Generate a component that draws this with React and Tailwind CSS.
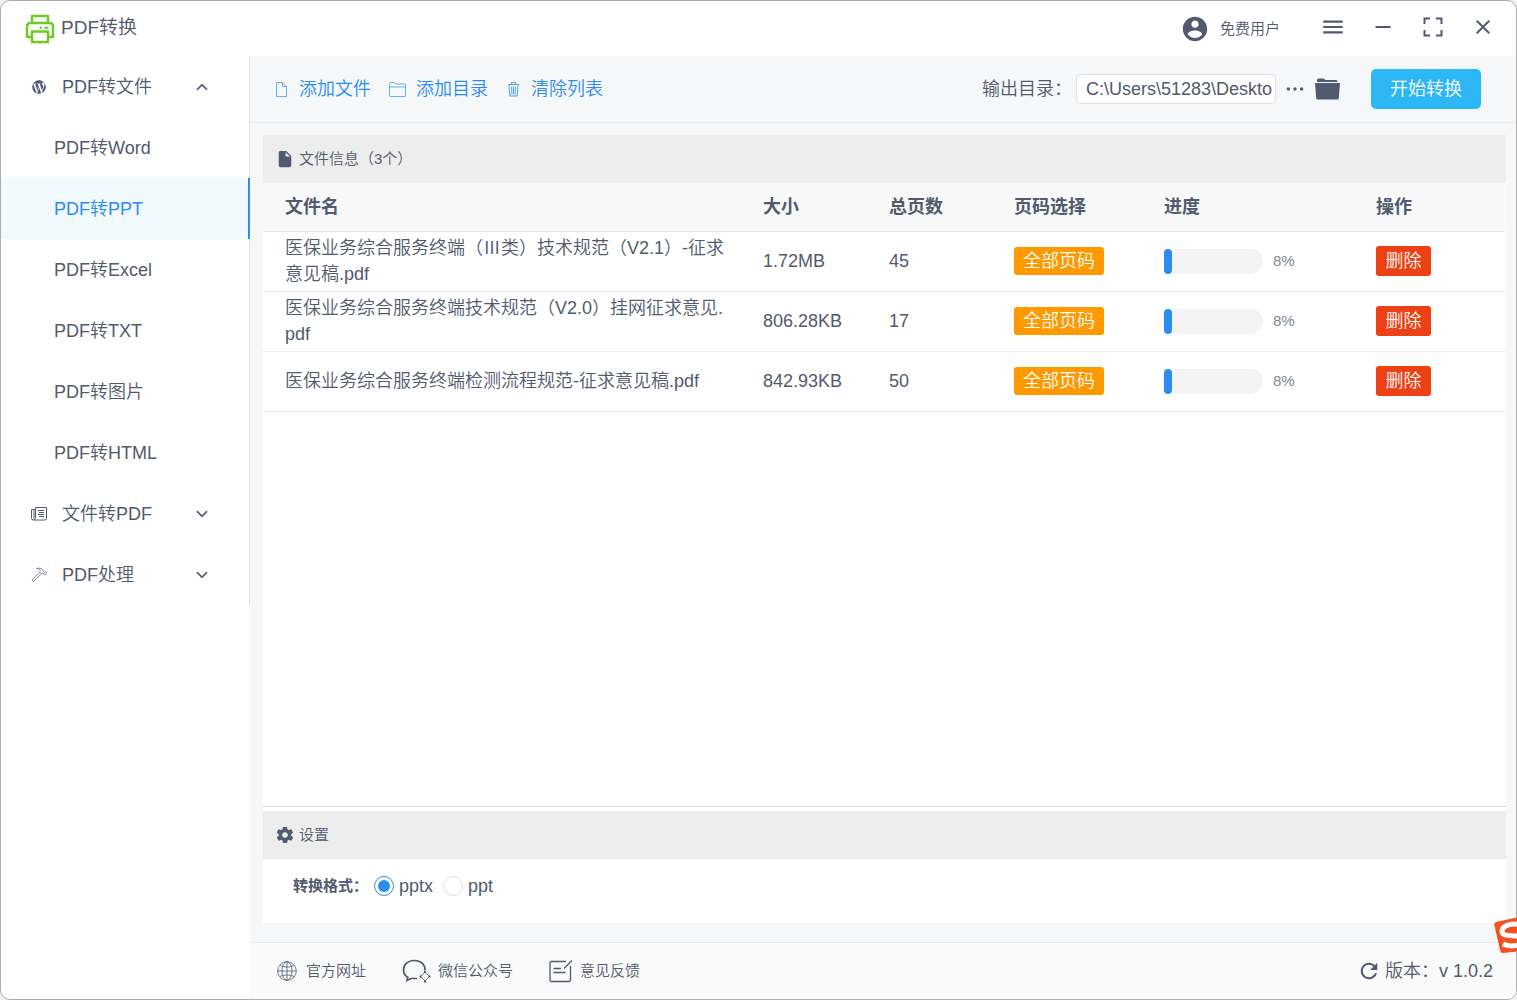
import React, { useState } from 'react';
import clsx from 'clsx';
import {
    IoIosArrowDown,
    IoIosArrowUp,
    IoIosMore,
    IoLogoWordpress,
    IoMdClose,
    IoMdContact,
    IoMdDocument,
    IoMdMenu,
    IoMdRefresh,
    IoMdRemove,
    IoMdSettings,
} from 'react-icons/io';

const Outline = ({ className, viewBox = '0 0 24 24', strokeWidth = 1, children }) => (
    <svg
        viewBox={viewBox}
        className={clsx('shrink-0', className)}
        fill="none"
        stroke="currentColor"
        strokeWidth={strokeWidth}
        aria-hidden="true"
    >
        {children}
    </svg>
);

const PrinterLogo = () => (
    <Outline className="w-[30px] h-[30px] text-[#6fca24]" viewBox="0 0 30 30" strokeWidth={2.4}>
        <path d="M7 8.500V2h16v6.500M6.500 23H2V12.500Q2 9 5.500 9h19q3.500 0 3.500 3.500V23h-4.500" strokeLinejoin="round" />
        <path d="M7 17.500h16V28H7z" />
        <path d="M14.500 13.700h2.500M19.500 13.700h4" strokeWidth={2} />
    </Outline>
);

const PaperIcon = () => (
    <Outline className="w-4 h-4" viewBox="0 0 16 16">
        <path d="M4.500 1.500h11v11a1.500 1.500 0 0 1-1.500 1.500H2.500a2 2 0 0 1-2-2V3.500h3M4.500 1.500v10.500a1.500 1.500 0 0 1-2 1.500M3 3.500v9" />
        <path d="M7 4.500h6M8 6.500h5M7 8.500h6M8 10.500h5" />
    </Outline>
);

const HammerIcon = () => (
    <Outline className="w-4 h-4" viewBox="0 0 16 16" strokeWidth={0.7}>
        <path d="M8.500 5.500 1 13l1.300 1.700L10 7.200M5.500 1.500c2.500-.8 4.500-.3 6.500 1.500l.5 2 1.200.5 1-1 1 1.500-2 2-1.500-1-.5-1-1.300.7-2-2.200 1-1c-1-1.300-2-2-3.900-2z" />
    </Outline>
);

const FileIcon = () => (
    <Outline className="w-[11px] h-[15px]" viewBox="0 0 11 15" strokeWidth={0.7}>
        <path d="M.5.5h6l4 4v10H.5zM6.500.5v4h4" />
    </Outline>
);

const FolderIcon = () => (
    <Outline className="w-[17px] h-[15px]" viewBox="0 0 17 15" strokeWidth={0.7}>
        <path d="M.5 13V1.500a1 1 0 0 1 1-1h3.500l2 1.500h8.500a1 1 0 0 1 1 1v10.500a1 1 0 0 1-1 1h-14a1 1 0 0 1-1-1.500zM.5 5h16" />
    </Outline>
);

const TrashIcon = () => (
    <Outline className="w-[15px] h-[15px]" viewBox="0 0 11 15" strokeWidth={0.8}>
        <path d="M0 2.500h11M3.500 2.500v-2h4v2M1 2.500l.8 11.500h7.400L10 2.500M3.600 4.500l.2 8M5.500 4.500v8M7.400 4.500l-.2 8" />
    </Outline>
);

const OpenFolderIcon = () => (
    <svg viewBox="0 0 25 22" className="w-[25px] h-[22px]" fill="currentColor" aria-hidden="true">
        <path d="M2 4V2A1.500 1.500 0 0 1 3.500.5h5L10.500 2H21a1.500 1.500 0 0 1 1.500 1.500V4zM0 5h25l-1.200 15a1.500 1.500 0 0 1-1.500 1.500H2.700A1.500 1.500 0 0 1 1.200 20z" />
    </svg>
);

const FullscreenIcon = () => (
    <Outline className="w-5 h-5" viewBox="0 0 20 20" strokeWidth={2}>
        <path d="M1.500 7V1.500H7M13 1.500h5.500V7M18.500 13v5.500H13M7 18.500H1.500V13" />
    </Outline>
);

const GlobeIcon = () => (
    <Outline className="w-5 h-5" viewBox="0 0 20 20" strokeWidth={0.8}>
        <circle cx="10" cy="10" r="9.300" />
        <ellipse cx="10" cy="10" rx="5" ry="9.300" />
        <path d="M10 .5v19M.5 10h19M3 4.500c4 2 10 2 14 0M3 15.500c4-2 10-2 14 0" />
    </Outline>
);

const WechatIcon = () => (
    <Outline className="w-[29px] h-6" viewBox="0 0 29 24" strokeWidth={1.7}>
        <path d="M23 11.500C23.500 6 19 1.500 12.500 1.500S1.500 5.500 1.500 11c0 3.300 1.600 5.800 4.300 7.300L5 21.500l4-2h6" />
        <path d="M23 13l4.500 4.500L23 22l-4.500-4.500z" strokeWidth={0.8} />
        <path d="M22 13h2M26.500 17.500h2M22 22.300h2M17.500 17.500h2" strokeWidth={2.200} />
    </Outline>
);

const FeedbackIcon = () => (
    <Outline className="w-6 h-6" viewBox="0 0 24 24" strokeWidth={1.3}>
        <path d="M17 2.500H2.500a1.500 1.500 0 0 0-1.500 1.500v17a1.500 1.500 0 0 0 1.500 1.500H20a1.500 1.500 0 0 0 1.500-1.500V7M15 9.500l8-8M4.500 9.500H12M4.500 13.500h12" />
    </Outline>
);

const InputMethodBadge = () => (
    <svg viewBox="0 0 23 36" className="absolute right-0 bottom-[47px] w-[23px] h-9" aria-hidden="true">
        <path d="M4 4.500 23 .5v34L9 36c-1.500 0-2.500-.8-2.800-2.500L.3 8C0 6 1.500 5 4 4.500z" fill="#f4511e" />
        <path d="M25 7.500c-9-1.500-17 1.500-17 6.500 0 6 8 4 16 5M9 27c5 2.500 11 2 15 1" fill="none" stroke="#fff" strokeWidth={5} />
    </svg>
);

const convertTypes = ['PDF转Word', 'PDF转PPT', 'PDF转Excel', 'PDF转TXT', 'PDF转图片', 'PDF转HTML'];

const files = [
    { name: '医保业务综合服务终端（Ⅲ类）技术规范（V2.1）-征求意见稿.pdf', size: '1.72MB', pages: 45, progress: 8 },
    { name: '医保业务综合服务终端技术规范（V2.0）挂网征求意见.pdf', size: '806.28KB', pages: 17, progress: 8 },
    { name: '医保业务综合服务终端检测流程规范-征求意见稿.pdf', size: '842.93KB', pages: 50, progress: 8 },
];

const columns = [
    { title: '文件名', width: '' },
    { title: '大小', width: 'w-[126px]' },
    { title: '总页数', width: 'w-[125px]' },
    { title: '页码选择', width: 'w-[150px]' },
    { title: '进度', width: 'w-[212px]' },
    { title: '操作', width: 'w-[151px]' },
];

const MenuGroup = ({ icon, title, open, onToggle }) => (
    <button type="button" onClick={onToggle} className="w-full h-[61px] pl-[29px] pr-[39px] flex items-center text-left">
        <span className="w-[18px] mr-3.5 shrink-0 flex justify-center">{icon}</span>
        <span className="flex-1">{title}</span>
        {open ? (
            <IoIosArrowUp className="w-4 h-4" strokeWidth={10} />
        ) : (
            <IoIosArrowDown className="w-4 h-4" strokeWidth={10} />
        )}
    </button>
);

const PanelTitle = ({ icon, children }) => (
    <h2 className="h-12 shrink-0 px-3 flex items-center gap-1 bg-[#ededed] text-[15px]">
        {icon}
        <span>{children}</span>
    </h2>
);

const WindowButton = ({ label, children }) => (
    <button type="button" aria-label={label} className="w-[26px] h-[26px] flex items-center justify-center">
        {children}
    </button>
);

const App = () => {
    const [active, setActive] = useState('PDF转PPT');
    const [open, setOpen] = useState(true);
    const [format, setFormat] = useState('pptx');

    return (
        <div className="relative bg-[#f0f0f0] text-lg leading-[26px] font-[350] text-[#515a6e] font-['Liberation_Sans','Noto_Sans_CJK_SC',sans-serif]">
            <div className="min-h-screen flex flex-col bg-white border border-[#adadad] rounded-[10px] overflow-hidden">
                <header className="h-[55px] shrink-0 pl-6 pr-5 flex items-center justify-between">
                    <div className="flex items-center gap-1.5">
                        <PrinterLogo />
                        <h1 className="pb-0.5 text-[19px] font-[350]">PDF转换</h1>
                    </div>
                    <div className="flex items-center">
                        <button type="button" className="flex items-center gap-2.5 mr-10 text-[15px]">
                            <IoMdContact className="w-[30px] h-[30px]" />
                            免费用户
                        </button>
                        <div className="flex items-center gap-6 pb-1">
                            <WindowButton label="菜单"><IoMdMenu className="w-[26px] h-[26px]" /></WindowButton>
                            <WindowButton label="最小化"><IoMdRemove className="w-6 h-6" /></WindowButton>
                            <WindowButton label="最大化"><FullscreenIcon /></WindowButton>
                            <WindowButton label="关闭"><IoMdClose className="w-6 h-6" /></WindowButton>
                        </div>
                    </div>
                </header>

                <div className="flex-1 flex">
                    <aside className="w-[249px] shrink-0">
                        <nav className="border-r border-[#dcdee2]">
                            <MenuGroup
                                icon={<IoLogoWordpress className="w-[18px] h-[18px]" />}
                                title="PDF转文件"
                                open={open}
                                onToggle={() => setOpen(!open)}
                            />
                            {open && (
                                <ul>
                                    {convertTypes.map((type) => (
                                        <li key={type} className="-mr-px">
                                            <button
                                                type="button"
                                                onClick={() => setActive(type)}
                                                className={clsx(
                                                    'w-full h-[61px] pl-[53px] text-left',
                                                    active === type && 'bg-[#f0faff] text-[#2d8cf0] border-r-2 border-[#2d8cf0]'
                                                )}
                                            >
                                                {type}
                                            </button>
                                        </li>
                                    ))}
                                </ul>
                            )}
                            <MenuGroup icon={<PaperIcon />} title="文件转PDF" />
                            <MenuGroup icon={<HammerIcon />} title="PDF处理" />
                        </nav>
                    </aside>

                    <div className="flex-1 min-w-0 flex flex-col bg-[#f5f7f9]">
                        <div className="h-[67px] shrink-0 pl-[26px] pr-[35px] flex items-center justify-between border-b border-[#e8eaec]">
                            <div className="flex items-center gap-[18px] text-[#2d8cf0]">
                                <button type="button" className="flex items-center gap-3"><FileIcon />添加文件</button>
                                <button type="button" className="flex items-center gap-2.5"><FolderIcon />添加目录</button>
                                <button type="button" className="flex items-center gap-2.5"><TrashIcon />清除列表</button>
                            </div>
                            <div className="flex items-center">
                                <label htmlFor="output-dir">输出目录：</label>
                                <input
                                    id="output-dir"
                                    type="text"
                                    defaultValue="C:\Users\51283\Deskto"
                                    className="w-[200px] h-[30px] ml-1 pl-[9px] bg-white border border-[#dcdee2] rounded"
                                />
                                <button type="button" aria-label="选择目录" className="ml-2"><IoIosMore className="w-[22px] h-[22px]" /></button>
                                <button type="button" aria-label="打开目录" className="ml-[9px]"><OpenFolderIcon /></button>
                                <button type="button" className="ml-[31px] w-[110px] h-10 rounded-[5px] bg-[#2db7f5] text-white">
                                    开始转换
                                </button>
                            </div>
                        </div>

                        <main className="flex-1 flex flex-col pt-3 pl-[13px] pr-2.5 pb-[19px]">
                            <section className="flex-1 flex flex-col bg-white border-b border-[#dcdee2]">
                                <PanelTitle icon={<IoMdDocument className="w-5 h-5" />}>文件信息（3个）</PanelTitle>
                                <div className="pr-px">
                                    <table className="w-full table-fixed text-left">
                                        <thead>
                                            <tr className="h-12 bg-[#f8f8f9] border-b border-[#e8eaec]">
                                                {columns.map((column) => (
                                                    <th key={column.title} className={clsx('px-[22px] font-bold', column.width)}>
                                                        {column.title}
                                                    </th>
                                                ))}
                                            </tr>
                                        </thead>
                                        <tbody>
                                            {files.map((file) => (
                                                <tr key={file.name} className="h-[60px] border-b border-[#e8eaec]">
                                                    <td className="pl-[22px] pr-3.5 break-all">{file.name}</td>
                                                    <td className="px-[22px]">{file.size}</td>
                                                    <td className="px-[22px]">{file.pages}</td>
                                                    <td className="px-[22px]">
                                                        <button type="button" className="block w-[90px] h-7 rounded-[3px] bg-[#ff9900] text-white">
                                                            全部页码
                                                        </button>
                                                    </td>
                                                    <td className="px-[22px]">
                                                        <div className="flex items-center gap-2.5">
                                                            <div className="w-[99px] h-[25px] rounded-full bg-[#f3f3f3]">
                                                                <div className="h-full rounded-full bg-[#2d8cf0]" style={{ width: `${file.progress}%` }} />
                                                            </div>
                                                            <span className="text-[15px] text-[#808695]">{file.progress}%</span>
                                                        </div>
                                                    </td>
                                                    <td className="px-[22px]">
                                                        <button type="button" className="block w-[55px] h-[30px] rounded-[3px] bg-[#ed4014] text-white">
                                                            删除
                                                        </button>
                                                    </td>
                                                </tr>
                                            ))}
                                        </tbody>
                                    </table>
                                </div>
                            </section>

                            <section className="pt-1 bg-white">
                                <PanelTitle icon={<IoMdSettings className="w-5 h-5" />}>设置</PanelTitle>
                                <div role="radiogroup" aria-labelledby="format-title" className="h-16 pl-[30px] pb-2.5 flex items-center">
                                    <span id="format-title" className="mr-1.5 text-[15px] font-bold">转换格式：</span>
                                    {['pptx', 'ppt'].map((value) => (
                                        <label key={value} className="flex items-center gap-[5px] mr-2.5">
                                            <input
                                                type="radio"
                                                name="format"
                                                value={value}
                                                checked={format === value}
                                                onChange={() => setFormat(value)}
                                                className="appearance-none w-5 h-5 rounded-full border border-[#dcdee2] bg-white bg-clip-content p-[3px] checked:border-[#2d8cf0] checked:bg-[#2d8cf0]"
                                            />
                                            {value}
                                        </label>
                                    ))}
                                </div>
                            </section>
                        </main>

                        <footer className="h-[57px] shrink-0 pl-[27px] pr-[23px] flex items-center justify-between bg-[#fafafa] border-t border-[#e8eaec]">
                            <div className="flex items-center gap-9 text-[15px]">
                                <a href="#site" className="flex items-center gap-[9px]"><GlobeIcon />官方网址</a>
                                <a href="#wechat" className="flex items-center gap-[7px]"><WechatIcon />微信公众号</a>
                                <a href="#feedback" className="flex items-center gap-[7px]"><FeedbackIcon />意见反馈</a>
                            </div>
                            <button type="button" className="flex items-center gap-1">
                                <IoMdRefresh className="w-6 h-6" />
                                版本：v 1.0.2
                            </button>
                        </footer>
                    </div>
                </div>
            </div>

            <InputMethodBadge />
        </div>
    );
};

export default App;
